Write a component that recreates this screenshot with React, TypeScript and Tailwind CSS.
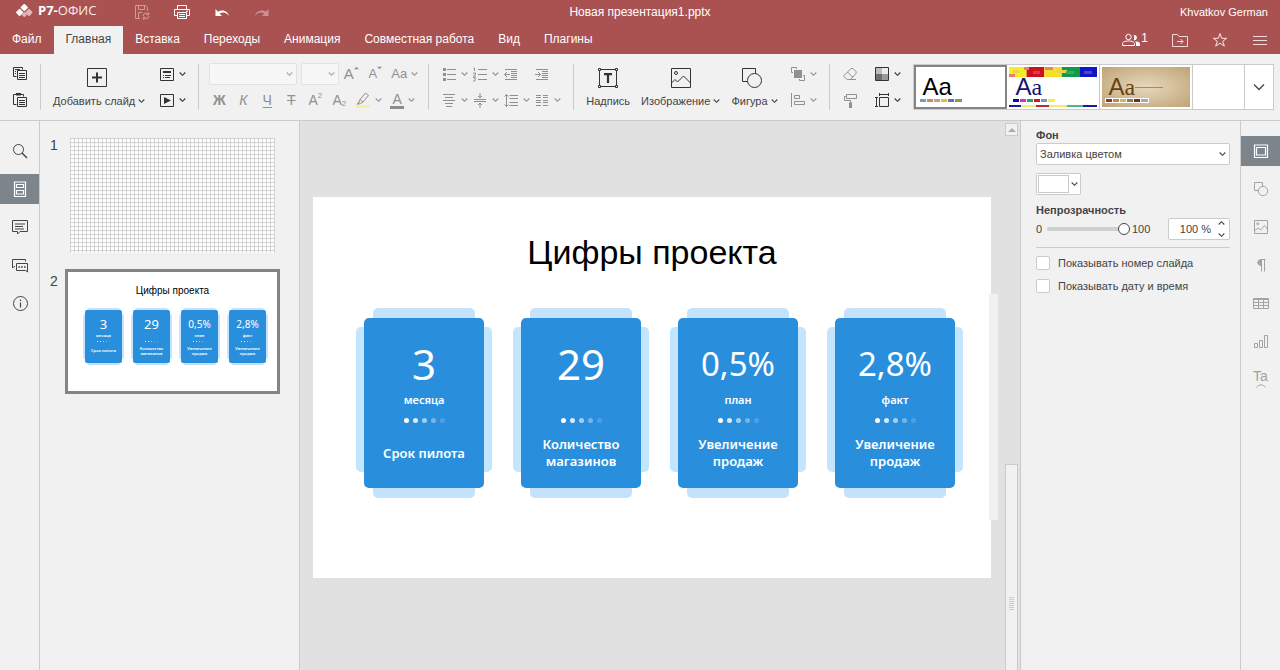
import type { ReactNode } from "react";

type IconProps = { children: ReactNode; className?: string; box?: string; sw?: number };

function Icon({ children, className = "size-4", box = "0 0 16 16", sw = 1 }: IconProps) {
  return (
    <svg viewBox={box} className={`shrink-0 ${className}`} fill="none" stroke="currentColor" strokeWidth={sw} aria-hidden="true">
      {children}
    </svg>
  );
}

function Chevron({ className = "h-1.5 w-[7px]" }: { className?: string }) {
  return (
    <svg viewBox="0 0 7 6" className={`shrink-0 ${className}`} fill="none" stroke="currentColor" strokeWidth="1.100" aria-hidden="true">
      <path d="M.7 1.500 3.500 4.300 6.300 1.500" />
    </svg>
  );
}

function Separator() {
  return <div className="mt-2.5 h-[46px] w-px shrink-0 bg-[#cbcbcb]" />;
}

function ToolButton({ label, icon, menu = false, off = false }: { label: string; icon: ReactNode; menu?: boolean; off?: boolean }) {
  return (
    <button
      type="button"
      aria-label={label}
      className={`flex h-[22px] shrink-0 items-center gap-1 ${off ? "text-[#909090]" : "text-[#333]"}`}
    >
      {icon}
      {menu && <Chevron />}
    </button>
  );
}

function Letter({ children, size = "text-[15px]", className = "" }: { children: ReactNode; size?: string; className?: string }) {
  return <span className={`flex w-4 justify-center leading-4 ${size} ${className}`}>{children}</span>;
}

function BigButton({ label, icon, menu = false }: { label: string; icon: ReactNode; menu?: boolean }) {
  return (
    <button type="button" className="flex shrink-0 flex-col items-center gap-[5px] pt-[11px] text-[#333]">
      {icon}
      <span className="flex items-center gap-[3px] text-[11px] leading-[14px] whitespace-nowrap text-[#444]">
        {label}
        {menu && <Chevron />}
      </span>
    </button>
  );
}

/* ---------- header ---------- */

const tabs = ["Файл", "Главная", "Вставка", "Переходы", "Анимация", "Совместная работа", "Вид", "Плагины"];

function Header() {
  return (
    <header className="bg-[#aa5252] text-white">
      <div className="grid h-[26px] grid-cols-[1fr_auto_1fr] items-start">
        <div className="flex h-6 items-center pl-[15px]">
          <svg viewBox="0 0 19 14" className="mb-0.5 h-3.5 w-[19px]" aria-label="Р7">
            <rect x="6.500" y="0.700" width="5.600" height="5.600" rx="1" transform="rotate(45 9.300 3.500)" fill="#fff" />
            <rect x="1.800" y="5.600" width="5.600" height="5.600" rx="1" transform="rotate(45 4.600 8.400)" fill="#fff" />
            <rect x="11.200" y="5.600" width="5.600" height="5.600" rx="1" transform="rotate(45 14 8.400)" fill="#e3b6b6" />
            <rect x="7.300" y="8.600" width="4" height="4" rx=".8" transform="rotate(45 9.300 10.600)" fill="#e3b6b6" />
          </svg>
          <span className="mb-1 ml-1 w-[57px] font-['Open_Sans',sans-serif] text-[13px] leading-5 font-bold whitespace-nowrap">
            Р7-<span className="font-medium text-[#fbeeee]">ОФИС</span>
          </span>
          <button type="button" aria-label="Сохранить" className="ml-[39px] text-[#d29c9c]">
            <Icon>
              <path d="M6 14.500H1.500v-13h10l2 2V7M4.500 1.500v4h6v-4M4.500 14.500v-6h4" />
              <path d="M9 12a3 3 0 0 1 5.500-1.500M15 12a3 3 0 0 1-5.500 1.500M14.700 8.300v2.400h-2.400M9.300 15.700v-2.400h2.400" />
            </Icon>
          </button>
          <button type="button" aria-label="Печать" className="ml-6">
            <Icon>
              <path d="M3.500 5.500v-4h9v4M3.500 11.500h-3v-6h15v6h-3M3.500 8.500h9v6h-9zM5 10.500h6M5 12.500h6M12 7.200h2" />
            </Icon>
          </button>
          <button type="button" aria-label="Отменить" className="ml-6">
            <Icon>
              <path d="M1.500 5v7H8L5.600 9.500C9 7.500 12.500 8.200 15 12c-.6-4.500-6.500-7.500-11-4.200z" fill="currentColor" stroke="none" />
            </Icon>
          </button>
          <button type="button" aria-label="Повторить" className="ml-6 text-[#cc9292]">
            <Icon>
              <path d="M14.500 5v7H8l2.400-2.500C7 7.500 3.500 8.200 1 12c.6-4.500 6.500-7.500 11-4.200z" fill="currentColor" stroke="none" />
            </Icon>
          </button>
        </div>
        <h1 className="text-[12px] leading-6">Новая презентация1.pptx</h1>
        <div className="pr-3 text-right text-[11px] leading-6">Khvatkov German</div>
      </div>
      <div className="flex h-7 justify-between">
        <nav className="flex">
          {tabs.map((t, i) => (
            <button
              key={t}
              type="button"
              className={`px-3 pb-[3px] text-[12px] whitespace-nowrap ${i === 1 ? "bg-[#f1f1f1] text-[#444]" : ""}`}
            >
              {t}
            </button>
          ))}
        </nav>
        <div className="flex items-center gap-6 pr-3">
          <button type="button" aria-label="Пользователи: 1" className="flex">
            <Icon className="h-4 w-[18px]" box="0 0 18 16">
              <circle cx="6.500" cy="5" r="2.700" />
              <path d="M.5 13.500v-1.700c0-1.800 2.400-2.800 6-2.800s6 1 6 2.800v1.700z" />
              <path d="M11.500 3a2.700 2.700 0 1 1 0 5.200c1-1.500 1-3.700 0-5.200zM13 9.300c3 0 5 1 5 2.500v2.200h-4v-2.500c0-.8-.3-1.500-1-2.200z" fill="currentColor" stroke="none" />
            </Icon>
            <span className="w-2 pl-px text-[12px] leading-3">1</span>
          </button>
          <button type="button" aria-label="Открыть расположение" className="text-[#f3dada]">
            <Icon>
              <path d="M.5 14.500V2.500h5l1.500 2h8.500v10zM5 9.500h6M8.500 7 11 9.500 8.500 12" />
            </Icon>
          </button>
          <button type="button" aria-label="Избранное" className="text-[#f8e6e6]">
            <Icon>
              <path d="M8 1.500 9.700 6.300h5.100l-4.100 3 1.600 4.900L8 11.200l-4.300 3 1.600-4.900-4.100-3h5.100z" />
            </Icon>
          </button>
          <button type="button" aria-label="Меню" className="text-[#f3dada]">
            <Icon>
              <path d="M1 4.500h14M1 8.500h14M1 12.500h14" />
            </Icon>
          </button>
        </div>
      </div>
    </header>
  );
}

/* ---------- toolbar ---------- */

function ToolSelect({ label, className }: { label: string; className: string }) {
  return (
    <span className={`relative h-[22px] text-[#a8a8a8] ${className}`}>
      <select aria-label={label} disabled className="h-full w-full appearance-none rounded-[2px] border border-[#e2e2e2] bg-[#f7f7f7]" />
      <Chevron className="absolute top-2 right-1 h-1.5 w-[7px]" />
    </span>
  );
}

const swatches = [
  ["#6f9fc9", "#d5874a", "#b5a49a", "#e0c02f", "#5878b0", "#76a34c"],
  ["#0a0aa0", "#d52fd0", "#2aa35a", "#cf1624", "#5fa3bd", "#f5f03c"],
  ["#8b3a24", "#b98a4a", "#cdbb50", "#7f8060", "#7c2a18", "#a9aba0"],
];

function Swatches({ set }: { set: number }) {
  return (
    <span className={`relative flex w-[42px] gap-px ${set === 2 ? "bg-white outline outline-white" : ""}`}>
      {swatches[set].map((c) => (
        <span key={c} className="h-[3px] flex-1" style={{ backgroundColor: c }} />
      ))}
    </span>
  );
}

const mosaic = ["#f4ee22", "#cf1020", "#f4e02c", "#129a48", "#1414c0"];

function ThemeGallery() {
  return (
    <div className="mt-2.5 mr-1.5 ml-3 flex h-[46px] min-w-0 flex-1 border border-[#cbcbcb] bg-white">
      <button type="button" aria-label="Тема 1" className="flex w-[93px] shrink-0 flex-col items-start border-2 border-[#848484] pt-2 pl-1">
        <span className="pl-[3px] text-[24px] leading-6 text-black">Aa</span>
        <Swatches set={0} />
      </button>
      <button type="button" aria-label="Тема 2" className="relative flex w-[93px] shrink-0 flex-col items-start border-r border-[#cbcbcb] pt-2.5 pl-1.5">
        <svg viewBox="0 0 88 40" className="absolute top-0.5 left-0.5 h-10 w-[88px]" preserveAspectRatio="none" aria-hidden="true">
          {mosaic.map((c, i) => (
            <rect key={c} x={i * 17.6} width="17.600" height="10" fill={c} />
          ))}
          <path d="M4 3h6v3H4zM48 3h10v3H48z" fill="#f0d24a" />
          <path d="M0 7h6v3H0zM15 0h5v3h-5zM36 0h8v3h-8z" fill="#e8806a" />
          <path d="M24 4h7v3h-7z" fill="#e03c40" />
          <path d="M57 4h8v3h-8z" fill="#34ad5c" />
          <path d="M75 4h8v3h-8z" fill="#4444d8" />
          <path d="M0 38h12v2H0zM74 38h14v2H74z" fill="#1a1a9a" />
          <path d="M12 38h15v2H12zM40 38h18v2H40z" fill="#f1ea7a" />
          <path d="M27 38h13v2H27z" fill="#c02838" />
          <path d="M58 38h16v2H58z" fill="#4fb58a" />
        </svg>
        <span className="relative pl-[3px] text-[24px] leading-6 text-[#14146e]">
          A<span className="font-['Liberation_Serif',serif]">a</span>
        </span>
        <Swatches set={1} />
      </button>
      <button type="button" aria-label="Тема 3" className="flex w-[93px] shrink-0 border-r border-[#cbcbcb] p-0.5">
        <span className="flex h-10 w-full flex-col items-start bg-radial from-[#e6d9bd] to-[#bfa376] pt-2 pl-1">
          <span className="flex items-center pl-[3px] text-[24px] leading-6 text-[#6b3f12]">
            A<span className="font-['Liberation_Serif',serif]">a</span>
            <span className="h-px w-7 bg-[#a98a5a]" />
          </span>
          <Swatches set={2} />
        </span>
      </button>
      <button type="button" aria-label="Тема 4" className="min-w-0 flex-1" />
      <button type="button" aria-label="Все темы" className="flex w-[29px] shrink-0 items-center justify-center border-l border-[#cbcbcb] text-[#444]">
        <Icon className="h-2 w-3" box="0 0 12 8" sw={1.3}>
          <path d="M1 1.500 6 6.500 11 1.500" />
        </Icon>
      </button>
    </div>
  );
}

function Toolbar() {
  return (
    <div className="flex h-[67px] border-b border-[#cbcbcb] bg-[#f1f1f1]">
      <div className="flex w-10 shrink-0 flex-col items-center gap-1 pt-[9px]">
        <ToolButton
          label="Копировать"
          icon={
            <Icon>
              <path d="M4.500 10.500h-3v-9h9v2M3 3.500h5M3 5.500h1M3 7.500h1" />
              <path d="M5.500 4.500h9v9h-9zM7 7.500h6M7 9.500h6M7 11.500h6" />
            </Icon>
          }
        />
        <ToolButton
          label="Вставить"
          icon={
            <Icon>
              <path d="M4.500 12.500h-3v-10h10v2" />
              <path d="M4 1h5v2.500H4z" fill="currentColor" stroke="none" />
              <path d="M5.500 5.500h9v9h-9zM7 8.500h6M7 10.500h6M7 12.500h6" />
            </Icon>
          }
        />
      </div>
      <Separator />
      <div className="flex shrink-0 pl-3">
        <BigButton
          label="Добавить слайд"
          menu
          icon={
            <Icon className="mr-1 size-6" box="0 0 24 24">
              <path d="M2.500 3.500h19v18h-19z" />
              <path d="M12 7.500v10M7 12.500h10" strokeWidth="2" />
            </Icon>
          }
        />
        <div className="flex flex-col gap-1 pt-[9px] pr-3 pl-[14px]">
          <ToolButton
            label="Макет слайда"
            menu
            icon={
              <Icon>
                <path d="M1.500 2.500h13v12h-13zM4 9.500h1M6 9.500h6M4 11.500h1M6 11.500h5" />
                <path d="M4 6h8" strokeWidth="2" />
              </Icon>
            }
          />
          <ToolButton
            label="Показ слайдов"
            menu
            icon={
              <Icon>
                <path d="M1.500 2.500h13v12h-13z" />
                <path d="M5 5v7l7-3.500z" fill="currentColor" stroke="none" />
              </Icon>
            }
          />
        </div>
      </div>
      <Separator />
      <div className="flex shrink-0 flex-col gap-1 pt-[9px] pr-2.5 pl-2.5">
        <div className="flex gap-1">
          <ToolSelect label="Шрифт" className="w-[88px]" />
          <ToolSelect label="Размер шрифта" className="w-[38px]" />
          <ToolButton
            off
            label="Увеличить размер"
            icon={
              <Letter>
                A
                <Icon className="size-[5px]" box="0 0 6 6">
                  <path d="M0 4 3 1l3 3z" fill="currentColor" stroke="none" />
                </Icon>
              </Letter>
            }
          />
          <span className="pl-1">
            <ToolButton
              off
              label="Уменьшить размер"
              icon={
                <Letter size="text-[13px]">
                  A
                  <Icon className="size-[5px]" box="0 0 6 6">
                    <path d="M0 1l3 3 3-3z" fill="currentColor" stroke="none" />
                  </Icon>
                </Letter>
              }
            />
          </span>
          <span className="pl-1">
            <ToolButton off menu label="Изменить регистр" icon={<Letter size="text-[13px]">Aa</Letter>} />
          </span>
        </div>
        <div className="flex gap-2 pl-0.5">
          <ToolButton off label="Полужирный" icon={<Letter size="text-[14px]" className="font-bold">Ж</Letter>} />
          <ToolButton off label="Курсив" icon={<Letter size="text-[14px]" className="italic">К</Letter>} />
          <ToolButton off label="Подчёркнутый" icon={<Letter size="text-[14px]" className="underline underline-offset-2">Ч</Letter>} />
          <ToolButton off label="Зачёркнутый" icon={<Letter size="text-[14px]" className="line-through">Т</Letter>} />
          <ToolButton off label="Надстрочный" icon={<Letter size="text-[14px]">A<span className="text-[8px] leading-[8px]">2</span></Letter>} />
          <ToolButton off label="Подстрочный" icon={<Letter size="text-[14px]">A<span className="self-end text-[8px] leading-[8px]">2</span></Letter>} />
          <ToolButton
            off
            menu
            label="Цвет выделения"
            icon={
              <Icon>
                <path d="M1 13h14v3H1z" fill="#f6f29a" stroke="none" />
                <path d="M5 7.500 10.500 1l3 2.500L8 10zM5 7.500 3.500 10.500 5.500 11.500 8 10" />
                <path d="M3.500 10 1.500 12.500h3.200z" fill="currentColor" stroke="none" />
              </Icon>
            }
          />
          <ToolButton
            off
            menu
            label="Цвет шрифта"
            icon={<span className="flex w-3.5 flex-col items-center border-b-3 border-[#8c8c8c] pt-0.5 text-[14px] leading-[13px]">A</span>}
          />
        </div>
      </div>
      <Separator />
      <div className="grid shrink-0 auto-rows-min grid-cols-[repeat(4,31px)] gap-y-1 pt-[9px] pr-2 pl-3">
        <ToolButton off menu label="Маркированный список" icon={<Icon><path d="M6 3.500h9M6 8.500h9M6 13.500h9" /><path d="M2 2h3v3H2zM2 7h3v3H2zM2 12h3v3H2z" fill="currentColor" stroke="none" /></Icon>} />
        <ToolButton off menu label="Нумерованный список" icon={<Icon><path d="M6 3.500h9M6 8.500h9M6 13.500h9M1.500 2h1v3M1 7h2.500v1.500L1.500 10h2.200M1 11.500h2.500L2.500 13c1.500 0 1.500 2.500-1.500 2" /></Icon>} />
        <ToolButton off label="Уменьшить отступ" icon={<Icon><path d="M2 3.500h12M8 5.500h6M8 7.500h6M8 9.500h6M8 11.500h6M2 13.500h12M1.500 8.500H7M4 6 1.500 8.500 4 11" /></Icon>} />
        <ToolButton off label="Увеличить отступ" icon={<Icon><path d="M2 3.500h12M8 5.500h6M8 7.500h6M8 9.500h6M8 11.500h6M2 13.500h12M1 8.500h5.500M4 6l2.500 2.500L4 11" /></Icon>} />
        <ToolButton off menu label="Выравнивание" icon={<Icon><path d="M2 2.500h12M4 5.500h8M2 8.500h12M4 11.500h8M5 14.500h6" /></Icon>} />
        <ToolButton off menu label="Вертикальное выравнивание" icon={<Icon><path d="M2 7.500h12M2 9.500h12M8 1v5M6 4l2 2 2-2M8 16v-5M6 13l2-2 2 2" /></Icon>} />
        <ToolButton off menu label="Междустрочный интервал" icon={<Icon><path d="M6.500 3.500H15M6.500 6.500H15M6.500 10.500H15M6.500 13.500H15M3.500 2.500v12M1.500 4.500l2-2 2 2M1.500 12.500l2 2 2-2" /></Icon>} />
        <ToolButton off menu label="Колонки" icon={<Icon><path d="M2 3.500h5M9 3.500h5M2 5.500h5M9 5.500h5M2 8.500h5M9 8.500h5M2 10.500h5M9 10.500h5M2 13.500h5M9 13.500h5" /></Icon>} />
      </div>
      <Separator />
      <div className="flex shrink-0 gap-[11px] px-3">
        <BigButton
          label="Надпись"
          icon={
            <Icon className="size-6" box="0 0 24 24">
              <path d="M3.500 4.500h17v17h-17z" />
              <path d="M2.500 3.500h2v2h-2zM19.500 3.500h2v2h-2zM2.500 20.500h2v2h-2zM19.500 20.500h2v2h-2z" fill="#f1f1f1" />
              <path d="M8 9.200h8M12 9v9" strokeWidth="2.200" />
            </Icon>
          }
        />
        <BigButton
          label="Изображение"
          menu
          icon={
            <Icon className="size-6" box="0 0 24 24">
              <path d="M2.500 3.500h19v19h-19z" />
              <circle cx="7" cy="8" r="1.500" />
              <path d="M2.500 18 6 14.500 8.500 17 14.500 11 21.500 18" />
            </Icon>
          }
        />
        <BigButton
          label="Фигура"
          menu
          icon={
            <Icon className="mr-1 size-6" box="0 0 24 24">
              <path d="M7 16.500H2.500v-13h13V8" />
              <circle cx="14.500" cy="15.500" r="7" />
            </Icon>
          }
        />
      </div>
      <div className="flex shrink-0 flex-col gap-1 pt-[9px] pr-3">
        <ToolButton off menu label="Порядок" icon={<Icon><path d="M4 4h8v8H4z" fill="currentColor" stroke="none" /><path d="M3 6.500H1.500v-5h5V3M13 9.500h1.500v5h-5V13" /></Icon>} />
        <ToolButton off menu label="Выровнять" icon={<Icon><path d="M1.500 1v14M4.500 3.500h5v3h-5zM4.500 9.500h10v3h-10z" /></Icon>} />
      </div>
      <Separator />
      <div className="flex shrink-0 flex-col gap-1 pt-[9px] pl-3">
        <ToolButton off label="Очистить стиль" icon={<Icon><path d="M2 9.500 9 2.500h2l3 3v2L8.500 13.500H5L2 10.500zM5.500 6l5.500 5.500M8 13.500h6" /></Icon>} />
        <ToolButton off label="Копировать стиль" icon={<Icon><path d="M4.500 2.500h10v4h-10zM4.500 4.500h-2v4h6V11" /><path d="M7 10.500h3V16H7z" fill="currentColor" stroke="none" /></Icon>} />
      </div>
      <div className="flex shrink-0 flex-col gap-1 pt-[9px] pl-4">
        <ToolButton
          menu
          label="Цветовая схема"
          icon={
            <Icon>
              <path d="M2 2h6v6H2z" fill="#bdbdbd" stroke="none" />
              <path d="M8 2h6v6H8z" fill="#ededed" stroke="none" />
              <path d="M2 8h6v6H2z" fill="#6f6f6f" stroke="none" />
              <path d="M8 8h6v6H8z" fill="#9a9a9a" stroke="none" />
              <path d="M1.500 1.500h13v13h-13z" />
            </Icon>
          }
        />
        <ToolButton menu label="Размер слайда" icon={<Icon><path d="M5.500 5.500h9v9h-9zM5.500 2.500h9M5.500 1v3M14.500 1v3M2.500 5.500v9M1 5.500h3M1 14.500h3" /></Icon>} />
      </div>
      <ThemeGallery />
    </div>
  );
}

/* ---------- side bars ---------- */

function SideButton({ label, active = false, off = false, children }: { label: string; active?: boolean; off?: boolean; children: ReactNode }) {
  return (
    <button
      type="button"
      aria-label={label}
      className={`flex h-[30px] w-full items-center justify-center ${active ? "bg-[#7d858c] text-white" : off ? "text-[#a3a3a3]" : "text-[#444]"}`}
    >
      <Icon>{children}</Icon>
    </button>
  );
}

function LeftBar() {
  return (
    <nav className="flex w-10 shrink-0 flex-col gap-2 border-r border-[#cbcbcb] bg-[#f1f1f1] pt-[15px]">
      <SideButton label="Поиск"><circle cx="6.500" cy="6.500" r="5" /><path d="m10 10 5 5" strokeWidth="1.400" /></SideButton>
      <SideButton label="Слайды" active><path d="M2.500 1h11v14.500h-11zM4.500 3.500h7v3h-7zM4.500 9.500h7v3.500h-7z" strokeWidth="1.200" /></SideButton>
      <SideButton label="Комментарии"><path d="M.5 1.500h15v11H8L5.500 15v-2.500h-5zM3 5h10M3 7.500h8M3 10h9" /></SideButton>
      <SideButton label="Чат">
        <path d="M3 9.500H2L.5 11V2.500h13v2M4.500 6.500h11v8.500l-2-1.500h-9z" />
        <path d="M6.500 9.200h1.600v1.600H6.500zM9.200 9.200h1.600v1.600H9.200zM12 9.200h1.600v1.600H12z" fill="currentColor" stroke="none" />
      </SideButton>
      <SideButton label="О программе"><circle cx="8.500" cy="8.500" r="7" /><path d="M8.500 7.500v5M8.500 4.500v1.500" strokeWidth="1.200" /></SideButton>
    </nav>
  );
}

function RightBar() {
  return (
    <nav className="flex w-10 shrink-0 flex-col gap-2 border-l border-[#cbcbcb] bg-[#f1f1f1] pt-[15px]">
      <SideButton label="Параметры слайда" active><path d="M1.500 2h13v12.500h-13zM3.500 4.500h9v7.500h-9z" strokeWidth="1.200" /></SideButton>
      <SideButton off label="Параметры фигуры"><path d="M5 9.500H1.500v-8h8V5" /><circle cx="10" cy="10" r="4.700" /></SideButton>
      <SideButton off label="Параметры изображения"><path d="M1.500 1.500h13v13h-13zM1.500 12 5 9l2.500 2 4-4.500 3 3.500" /><circle cx="4.700" cy="4.700" r="1" /></SideButton>
      <SideButton off label="Параметры абзаца"><path d="M7.500 2.500h5M8.500 2.500v12M11.500 2.500v12" /><path d="M8.500 2.500v6c-5 0-5-6 0-6z" fill="currentColor" /></SideButton>
      <SideButton off label="Параметры таблицы"><path d="M.5 3.500h15v10H.5zM.5 7.500h15M.5 10.500h15M5.500 3.500v10M10.500 3.500v10M.5 4.500h15" /></SideButton>
      <SideButton off label="Параметры диаграммы"><path d="M1.500 10.500h3v4h-3zM6.500 7.500h3v7h-3zM11.500 2.500h3v12h-3z" /></SideButton>
      <button type="button" aria-label="Параметры текста" className="flex h-[30px] flex-col items-center justify-center text-[14px] leading-3 text-[#a3a3a3]">
        Ta
        <Icon className="mt-0.5 h-1 w-2.5" box="0 0 10 4"><path d="M.5 3.500c2-3.500 7-3.500 9 0" /></Icon>
      </button>
    </nav>
  );
}

/* ---------- slide ---------- */

type Stat = { value: string; unit?: string; caption: string[]; small?: boolean };

const stats: Stat[] = [
  { value: "3", unit: "месяца", caption: ["Срок пилота"] },
  { value: "29", caption: ["Количество", "магазинов"] },
  { value: "0,5%", unit: "план", caption: ["Увеличение", "продаж"], small: true },
  { value: "2,8%", unit: "факт", caption: ["Увеличение", "продаж"], small: true },
];

const dotTones = ["bg-white", "bg-[#d8ecfb]", "bg-[#a5cff2]", "bg-[#75b5ea]", "bg-[#4f9fe2]"];

function StatCard({ stat }: { stat: Stat }) {
  return (
    <div className="relative w-[136px] px-2 py-2.5 font-['Noto_Sans',sans-serif] text-white">
      <div className="absolute inset-x-[17px] inset-y-0 rounded-[5px] bg-[#c5e2fc]" />
      <div className="absolute inset-x-0 top-[19px] bottom-[26px] rounded-[5px] bg-[#c3e6fe]" />
      <div className="relative flex h-[170px] flex-col items-center rounded-[5px] bg-[#298fdd] pt-[22px]">
        <div className={`h-[50px] leading-[48px] ${stat.small ? "text-[33px]" : "text-[42px]"}`}>{stat.value}</div>
        <div className="h-[18px] pt-0.5 text-[11px] leading-4 font-semibold">{stat.unit}</div>
        <div className="mt-2.5 flex gap-1">
          {dotTones.map((d) => (
            <span key={d} className={`size-[5px] rounded-full ${d}`} />
          ))}
        </div>
        <div className="flex h-[60px] flex-col items-center justify-center text-[13px] leading-[17px] font-semibold">
          {stat.caption.map((c) => (
            <span key={c}>{c}</span>
          ))}
        </div>
      </div>
    </div>
  );
}

function MiniCard({ stat }: { stat: Stat }) {
  return (
    <div className="relative w-[41px] px-0.5 py-0.5 font-['Noto_Sans',sans-serif] text-white">
      <div className="absolute inset-x-1 inset-y-0 rounded-[2px] bg-[#c3e3fd]" />
      <div className="absolute inset-x-0 top-1.5 bottom-1.5 rounded-[2px] bg-[#c3e6fe]" />
      <div className="relative flex h-[53px] flex-col items-center rounded-[2px] bg-[#298fdd] pt-2">
        <div className={`h-[15px] leading-[13px] ${stat.small ? "text-[10px]" : "text-[13px]"}`}>{stat.value}</div>
        <div className="h-1.5 text-[4px] leading-[6px] font-semibold">{stat.unit}</div>
        <div className="mt-0.5 flex gap-0.5">
          {dotTones.map((d) => (
            <span key={d} className={`size-px ${d}`} />
          ))}
        </div>
        <div className="flex h-[17px] flex-col items-center justify-center text-[4px] leading-[5px] font-semibold">
          {stat.caption.map((c) => (
            <span key={c}>{c}</span>
          ))}
        </div>
      </div>
    </div>
  );
}

function SlideList() {
  return (
    <aside className="w-[260px] shrink-0 border-r border-[#cbcbcb] bg-[#f1f1f1] pt-[17px] pr-[19px] text-[14px] leading-[14px] text-[#444]">
      <button type="button" aria-label="Слайд 1" className="flex w-full text-left">
        <span className="w-[30px] shrink-0 pl-2.5">1</span>
        <span className="mr-[5px] h-[115px] flex-1 bg-white bg-[linear-gradient(#d2d2d2_1px,transparent_1px),linear-gradient(90deg,#d2d2d2_1px,transparent_1px)] bg-size-[4px_4px]" />
      </button>
      <button type="button" aria-label="Слайд 2" className="mt-4 flex w-full text-left">
        <span className="w-[25px] shrink-0 pt-[5px] pl-2.5">2</span>
        <span className="flex h-[125px] flex-1 flex-col border-3 border-[#848484] bg-white pt-3 text-black">
          <span className="text-center text-[10px] leading-[14px]">Цифры проекта</span>
          <span className="mt-2.5 flex gap-[7px] pl-[15px]">
            {stats.map((s, i) => (
              <MiniCard key={i} stat={s} />
            ))}
          </span>
        </span>
      </button>
    </aside>
  );
}

function Canvas() {
  return (
    <main className="flex min-w-0 flex-1 bg-[#e1e1e1]">
      <div className="min-w-0 flex-1 pt-[76px] pr-3.5 pl-[13px]">
        <section className="relative flex aspect-video w-full flex-col bg-white">
          <h2 className="pt-8 text-center text-[34px] leading-[46px] text-black">Цифры проекта</h2>
          <div className="mt-[33px] flex gap-[21px] pl-[43px]">
            {stats.map((s, i) => (
              <StatCard key={i} stat={s} />
            ))}
          </div>
          <div className="absolute top-[97px] -right-[7px] h-[226px] w-[9px] bg-[#f0f0f0]" />
        </section>
      </div>
      <div className="mr-0.5 flex w-[13px] shrink-0 flex-col pt-0.5">
        <button type="button" aria-label="Прокрутить вверх" className="flex h-[13px] items-center justify-center border border-[#cbcbcb] bg-[#f1f1f1] text-[#adadad]">
          <Icon className="h-1 w-2" box="0 0 8 4"><path d="M0 4 4 0l4 4z" fill="currentColor" stroke="none" /></Icon>
        </button>
        <div className="flex-[328]" />
        <div className="flex flex-[73] flex-col items-center border border-b-0 border-[#cbcbcb] bg-[#f1f1f1] pt-[132px]">
          <Icon className="h-3.5 w-[5px] text-[#cbcbcb]" box="0 0 5 14"><path d="M0 .5h5M0 2.500h5M0 4.500h5M0 6.500h5M0 8.500h5M0 10.500h5M0 12.500h5" /></Icon>
        </div>
      </div>
    </main>
  );
}

/* ---------- settings panel ---------- */

function SettingsPanel() {
  return (
    <aside className="w-[220px] shrink-0 border-l border-[#cbcbcb] bg-[#f1f1f1] pt-[7px] pr-2.5 pl-[15px] text-[11px] text-[#444]">
      <label htmlFor="fill" className="block leading-[15px] font-bold">Фон</label>
      <div className="relative h-[22px]">
        <select id="fill" className="h-full w-full appearance-none rounded-[2px] border border-[#cbcbcb] bg-white px-[3px]">
          <option>Заливка цветом</option>
        </select>
        <Chevron className="absolute top-2 right-1 h-1.5 w-[7px]" />
      </div>
      <button type="button" aria-label="Цвет фона" className="mt-2 flex h-[22px] w-[45px] items-center gap-0.5 rounded-[2px] border border-[#cbcbcb] bg-white pl-px">
        <span className="h-[18px] w-[31px] border border-[#cbcbcb]" />
        <Chevron />
      </button>
      <label htmlFor="opacity" className="mt-2 block leading-[15px] font-bold">Непрозрачность</label>
      <div className="flex h-[22px] items-center">
        <span className="w-[11px]">0</span>
        <input
          id="opacity"
          type="range"
          defaultValue={100}
          className="h-3 w-[83px] appearance-none bg-transparent [&::-webkit-slider-runnable-track]:h-1 [&::-webkit-slider-runnable-track]:rounded-full [&::-webkit-slider-runnable-track]:bg-[#cfcfcf] [&::-webkit-slider-thumb]:-mt-1 [&::-webkit-slider-thumb]:size-3 [&::-webkit-slider-thumb]:appearance-none [&::-webkit-slider-thumb]:rounded-full [&::-webkit-slider-thumb]:border [&::-webkit-slider-thumb]:border-[#444] [&::-webkit-slider-thumb]:bg-white"
        />
        <span className="pl-0.5">100</span>
        <div className="relative ml-auto h-[22px] w-[62px]">
          <input aria-label="Непрозрачность, %" defaultValue="100 %" className="h-full w-full rounded-[2px] border border-[#cbcbcb] bg-white pr-[18px] text-right" />
          <span className="absolute inset-y-0.5 right-[5px] flex flex-col justify-between">
            <Chevron className="h-1.5 w-[7px] rotate-180" />
            <Chevron />
          </span>
        </div>
      </div>
      <hr className="mt-[7px] border-[#cbcbcb]" />
      <div className="mt-2 flex flex-col gap-[9px]">
        {["Показывать номер слайда", "Показывать дату и время"].map((t) => (
          <label key={t} className="flex h-3.5 items-center gap-2">
            <input type="checkbox" className="size-3.5 appearance-none rounded-[2px] border border-[#cbcbcb] bg-white" />
            {t}
          </label>
        ))}
      </div>
    </aside>
  );
}

export default function App() {
  return (
    <div className="flex min-h-screen flex-col bg-[#e1e1e1] font-['Liberation_Sans',Arial,sans-serif]">
      <Header />
      <Toolbar />
      <div className="flex flex-1">
        <LeftBar />
        <SlideList />
        <Canvas />
        <SettingsPanel />
        <RightBar />
      </div>
    </div>
  );
}
